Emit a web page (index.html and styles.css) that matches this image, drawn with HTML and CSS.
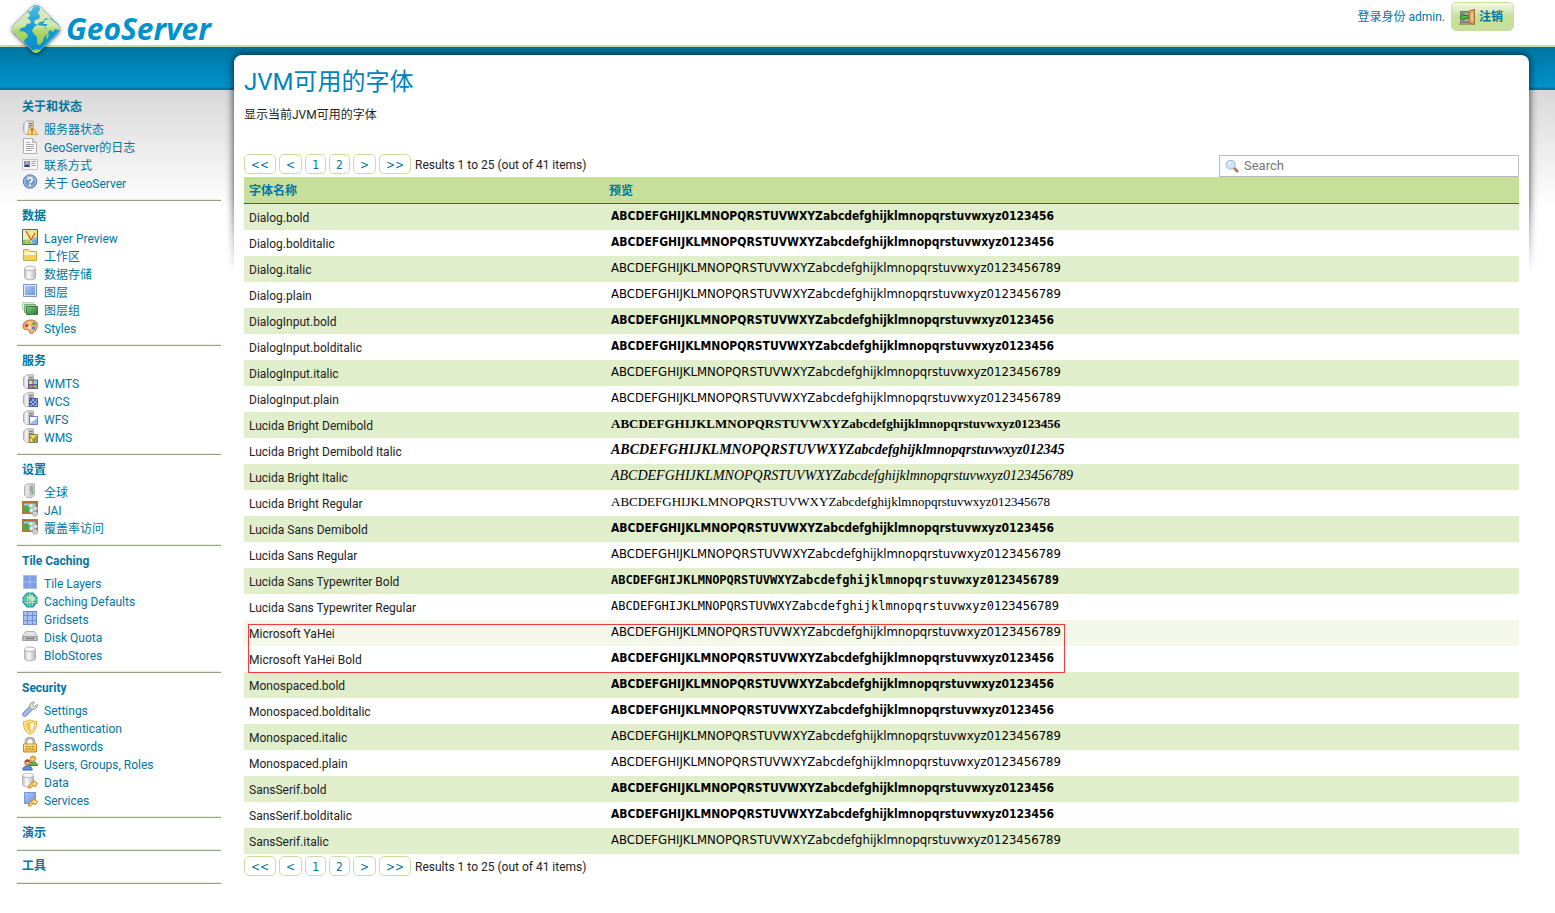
FILE: index.html
```html
<!DOCTYPE html>
<html lang="zh-CN">
<head>
<meta charset="utf-8">
<title>GeoServer: JVM可用的字体</title>
<link rel="stylesheet" href="styles.css">
</head>
<body>
<svg class="sprite" aria-hidden="true">
  <defs>
    <linearGradient id="g-blue" x1="0" y1="0" x2="1" y2="1"><stop offset="0" stop-color="#aac6f2"/><stop offset="1" stop-color="#7098dc"/></linearGradient>
    <linearGradient id="g-grey" x1="0" x2="1"><stop offset="0" stop-color="#c4c4c4"/><stop offset=".4" stop-color="#fafafa"/><stop offset="1" stop-color="#b4b4b4"/></linearGradient>
    <linearGradient id="g-gold" x1="0" y1="0" x2="0" y2="1"><stop offset="0" stop-color="#fff0a8"/><stop offset="1" stop-color="#efb83c"/></linearGradient>
    <linearGradient id="g-green" x1="0" y1="0" x2="1" y2="1"><stop offset="0" stop-color="#8cc88c"/><stop offset="1" stop-color="#217a2b"/></linearGradient>
    <symbol id="p-server" viewBox="0 0 16 16"><path d="M1.500 3.500 5 .8h6.500v10.700L9 14.500H4.500L1.500 12z" fill="#d8d8d8" stroke="#b0b0b0"/><path d="M4.500 1.800v12" stroke="#f6f6f6" stroke-width="2"/><path d="M6.500 2h4.500v11H6.500z" fill="#c4c4c4"/><path d="M7 3.500h3.500M7 5.500h3.500M7 7.500h3.500" stroke="#7f7f7f"/></symbol>
    <symbol id="p-db" viewBox="0 0 16 16"><path d="M2.500 3.500v9c0 1.300 2.500 2.300 5.500 2.300s5.500-1 5.500-2.300v-9z" fill="url(#g-grey)" stroke="#b4b4b4"/><ellipse cx="8" cy="3.300" rx="5.500" ry="2.300" fill="#f6f6f6" stroke="#b8b8b8"/></symbol>
    <symbol id="p-key" viewBox="0 0 16 16"><path d="M11.500 7.500 15.500 10.500 13.500 13.500 11 12.800 8.500 15H6.500v-2l3.500-3z" fill="#f6c95c" stroke="#c08a2c"/><circle cx="13" cy="10.800" r=".9" fill="#fff"/></symbol>
    <symbol id="i-status" viewBox="0 0 16 16"><use href="#p-server"/><path d="M10 5.500 15.500 14.500H4.500z" fill="#ffd977" stroke="#e0a040" stroke-linejoin="round"/><path d="M10 8.300v3.200M10 12.500v1.200" stroke="#6c4a12" stroke-width="1.300"/></symbol>
    <symbol id="i-log" viewBox="0 0 16 16"><path d="M1.500.5h9l4 4v11h-13z" fill="#fafafa" stroke="#b0b0b0"/><path d="M10.500.5v4h4" fill="#dedede" stroke="#b0b0b0"/><path d="M4 4.500h4M4 6.500h8M4 8.500h8M4 10.500h8M4 12.500h6" stroke="#ababab"/></symbol>
    <symbol id="i-contact" viewBox="0 0 16 16"><path d="M.5 3.500h15v10H.5z" fill="#f8f8f8" stroke="#c4c4c4"/><path d="M2 5h6v6H2z" fill="#5c91d6"/><circle cx="5" cy="7" r="1.700" fill="#e7a36b"/><path d="M2.500 11c.3-3 4.700-3 5 0z" fill="#263c70"/><path d="M9.500 5.500H14M9.500 7.500H13M9.500 9.500H14" stroke="#a0a0a0"/></symbol>
    <symbol id="i-about" viewBox="0 0 16 16"><circle cx="8" cy="7.500" r="6.700" fill="#7298d0" stroke="#5878ac"/><circle cx="8" cy="7.500" r="5.500" fill="none" stroke="#b7cdec"/><path d="M5.700 5.800C6 3 10.500 3.200 10.300 5.800 10.200 7.400 8 7.300 8 9.300M8 10.300v1.600" fill="none" stroke="#fff" stroke-width="1.700"/></symbol>
    <symbol id="i-preview" viewBox="0 0 16 16"><path d="M.5.5h15v15H.5z" fill="#f2e472"/><path d="M1 1h4l2 6-2 4H1z" fill="#e8efb4"/><path d="M10 10l5-2v7h-5z" fill="#67a8df"/><path d="M1 11l5-1 5 5H1z" fill="#8fc65c"/><path d="M5 1v14M10 1v14M1 5h14M1 10h14" stroke="#fff" stroke-opacity=".4"/><path d="M4 2l5 9 4-7" fill="none" stroke="#df4a32" stroke-width="1.300"/><path d="M.5.5h15v15H.5z" fill="none" stroke="#4f6b5c"/></symbol>
    <symbol id="i-folder" viewBox="0 0 16 16"><path d="M1.500 13.500v-11h5l1.500 2h6.500v9z" fill="#fbe49a" stroke="#d6a83c"/><path d="M2 8h12v5H2z" fill="#f4cf62"/><path d="M3 6.500h10" stroke="#fff" stroke-width="2"/></symbol>
    <symbol id="i-layer" viewBox="0 0 16 16"><path d="M1.500 1.500h13v12h-13z" fill="#dfe9fa" stroke="#7a95d0"/><path d="M3 3h10v9H3z" fill="url(#g-blue)"/></symbol>
    <symbol id="i-group" viewBox="0 0 16 16"><path d="M.5 1.500h11v7H.5z" fill="#dcefdc" stroke="#b6dab6"/><path d="M2.500 3.500h11v8h-11z" fill="#a7d3a7" stroke="#6fae72"/><path d="M4.500 5.500h11v8h-11z" fill="url(#g-green)" stroke="#2f7d35"/></symbol>
    <symbol id="i-styles" viewBox="0 0 16 16"><path d="M1 8C.5 4 4 1 9 1c4 0 6.500 2 6.300 5-.2 4-2.800 8.500-6 8.500-2.500 0-1-3-3-3.500S1.500 11 1 8z" fill="#efb378" stroke="#bd7040"/><circle cx="4.500" cy="6.500" r="1.700" fill="#df4b36"/><circle cx="8" cy="4" r="1.500" fill="#f4df53"/><circle cx="12" cy="4.700" r="1.600" fill="#55a74b"/><circle cx="7.500" cy="8.500" r="1.500" fill="#f8efe4"/><circle cx="11.500" cy="9" r="1.700" fill="#4c86ca"/></symbol>
    <symbol id="i-wmts" viewBox="0 0 16 16"><use href="#p-server"/><path d="M6 5.500h10V15H6z" fill="#4f5f8d"/><path d="M7 6.500h3.500V10H7z" fill="#f2d858"/><path d="M11.500 6.500H15V10h-3.500z" fill="#9fc7ef"/><path d="M7 11h3.500v3H7z" fill="#e5763e"/><path d="M11.500 11H15v3h-3.500z" fill="#7fbe58"/></symbol>
    <symbol id="i-wcs" viewBox="0 0 16 16"><use href="#p-server"/><path d="M7.500 6.500h8v8h-8z" fill="#9db2ea" stroke="#4659a8"/><path d="M8 7h2v2H8zM12 7h2v2h-2zM10 9h2v2h-2zM14 9h1v2h-1zM8 11h2v2H8zM12 11h2v2h-2zM10 13h2v1h-2z" fill="#4a60bd"/></symbol>
    <symbol id="i-wfs" viewBox="0 0 16 16"><use href="#p-server"/><path d="M7.500 6.500h8v8h-8z" fill="#fff" stroke="#6a80c0"/><path d="M8 14c1-4 4-2 7-6v6z" fill="#9fbfec"/></symbol>
    <symbol id="i-wms" viewBox="0 0 16 16"><use href="#p-server"/><path d="M7.500 6.500h8v8h-8z" fill="#f0dc60" stroke="#817a49"/><path d="M11 11l4-3v6h-5z" fill="#7dbb66"/><path d="M8 8l4 5 2-5" fill="none" stroke="#dc5a32"/></symbol>
    <symbol id="i-global" viewBox="0 0 16 16"><path d="M2.500 3 5.500.8h7v11l-2.500 2.700H5L2.500 12z" fill="#e2e2e2" stroke="#b0b0b0"/><path d="M7 1.500h5v12H7z" fill="#cacaca"/><path d="M8 4h3M8 6h3M8 8h3" stroke="#808080"/><path d="M9.500 9.500h1.500v1.500H9.500z" fill="#3da743"/></symbol>
    <symbol id="i-jai" viewBox="0 0 16 16"><path d="M1 1h14v11H1z" fill="#8fd0f0" stroke="#b47a34" stroke-width="2"/><path d="M2 11V5l3-1 6 7z" fill="#4ea84a"/><path d="M2 2h12v9" fill="none" stroke="#7d4f20" stroke-width=".6"/><circle cx="9" cy="4.500" r="1.500" fill="#fff08a"/><circle cx="9.500" cy="9.500" r="2" fill="#eee" stroke="#bbb"/><circle cx="13.500" cy="7.500" r="1.700" fill="#f2f2f2" stroke="#bbb"/><circle cx="13" cy="12.700" r="2.500" fill="#ededed" stroke="#a0a0a0"/><circle cx="13" cy="12.700" r=".8" fill="#888"/></symbol>
    <symbol id="i-tiles" viewBox="0 0 16 16"><path d="M1 1h14v14H1z" fill="#a9bfee"/><path d="M2 2h5.500v5.500H2zM8.500 2H14v5.500H8.500zM2 8.500h5.500V14H2zM8.500 8.500H14V14H8.500z" fill="#7f9fe0"/></symbol>
    <symbol id="i-cache" viewBox="0 0 16 16"><path d="M5 1h6l4 4.500v5L11 15H5l-4-4.500v-5z" fill="#3fb39c" stroke="#1795a0" stroke-linejoin="round"/><path d="M8 2l6 5-4 3-4-4z" fill="#b7e089"/><path d="M5.500 2.500v11M8 1v14M10.500 2.500v11M2.500 5.500h11M1 8h14M2.500 10.500h11" stroke="#e4f8ec" stroke-opacity=".7" stroke-width=".8"/></symbol>
    <symbol id="i-grid" viewBox="0 0 16 16"><path d="M1 1h14v14H1z" fill="#6f8ed8"/><path d="M2 2h3v3H2zM6 2h4v3H6zM11 2h3v3h-3zM2 6h3v4H2zM6 6h4v4H6zM11 6h3v4h-3zM2 11h3v3H2zM6 11h4v3H6zM11 11h3v3h-3z" fill="#a5c0f0"/></symbol>
    <symbol id="i-disk" viewBox="0 0 16 16"><path d="M3.500 3.500h9l3 5v4H.5v-4z" fill="#e2e2e2" stroke="#b4b4b4"/><path d="M1 8.500h14v4H1z" fill="#c8c8c8" stroke="#9c9c9c"/><path d="M3.500 10.500h9" stroke="#777" stroke-width="1.500"/></symbol>
    <symbol id="i-wrench" viewBox="0 0 16 16"><path d="M2.800 13.200 8 8" stroke="#6c8ace" stroke-width="5" stroke-linecap="round"/><path d="M2.800 13.200 8 8" stroke="#a3bdf0" stroke-width="3" stroke-linecap="round"/><path d="M7.500 6.500C7 3 9.500.5 12.500 1L10.500 3.500l2 2 3-2c.2 3-2.500 5.500-5.500 5z" fill="#d8d8d8" stroke="#9c9c9c"/></symbol>
    <symbol id="i-shield" viewBox="0 0 16 16"><path d="M1.500 2.500C4 2.500 6 2 8 .7c2 1.300 4 1.800 6.500 1.800C14.500 9 13 13 8 15.300 3 13 1.500 9 1.500 2.500z" fill="#fbe9a8" stroke="#e2ac33"/><path d="M3.500 4C5.500 3.800 6.700 3.500 8 2.700V13C5 11.500 3.700 8.500 3.500 4z" fill="#f5c84c"/><path d="M8 2.700c1.300.8 2.500 1.100 4.500 1.300C12.300 8.500 11 11.500 8 13z" fill="#fff" stroke="#efc04a"/></symbol>
    <symbol id="i-lock" viewBox="0 0 16 16"><path d="M4 7.500V4.800c0-5 8-5 8 0v2.700" fill="none" stroke="#8c8c8c" stroke-width="2.600"/><path d="M4 7.500V4.800c0-5 8-5 8 0v2.700" fill="none" stroke="#dcdcdc"/><path d="M1.500 7h13v8h-13z" fill="url(#g-gold)" stroke="#c78a24"/><path d="M3.500 9.500h3M3.500 12h3M9.500 9.500h3M9.500 12h3M8 9v4" stroke="#b07820"/></symbol>
    <symbol id="i-users" viewBox="0 0 16 16"><path d="M6.500 10.500c0-5 9-5 9 0z" fill="#67b45b" stroke="#3e8737"/><circle cx="11" cy="3.700" r="2.700" fill="#f4c68c" stroke="#c5882f"/><path d="M8.300 3C8.500 0 13.500 0 13.700 3z" fill="#e2a62f"/><path d="M.8 15c0-5.500 9.400-5.500 9.400 0z" fill="#5b93dd" stroke="#2f62ad"/><circle cx="5.500" cy="7.500" r="2.800" fill="#f0b98a" stroke="#a8642f"/><path d="M2.700 7C3 3.500 8 3.500 8.300 7z" fill="#a2512a"/></symbol>
    <symbol id="i-dbkey" viewBox="0 0 16 16"><g transform="translate(-2 -1)"><use href="#p-db" width="16" height="16"/></g><use href="#p-key"/></symbol>
    <symbol id="i-svckey" viewBox="0 0 16 16"><path d="M2.500 1.500h11v11h-11z" fill="url(#g-blue)" stroke="#7494d4"/><use href="#p-key"/></symbol>
    <symbol id="i-door" viewBox="0 0 16 16"><path d="M1 2h10v12H1z" fill="#777a70"/><path d="M2.500 3.500h7v9h-7z" fill="#a9ada2"/><path d="M0 15h15" stroke="#8a5b32"/><path d="M10 2 15.500.3v15.400L10 13.500z" fill="#dca262" stroke="#ad6c32"/><path d="M12 4l2-.7v9.200l-2-.7z" fill="#efc28b"/><path d="M1 8l4-3.500v2h4v3H5v2z" fill="#53ba4e" stroke="#237a27"/></symbol>
    <symbol id="i-search" viewBox="0 0 16 16"><path d="M10 10 14 14" stroke="#b07a44" stroke-width="3" stroke-linecap="round"/><circle cx="6.500" cy="6.500" r="5" fill="#cfe3fa" stroke="#a9c0e6" stroke-width="1.500"/><path d="M3.800 6c.3-1.500 1.500-2.500 3-2.500" fill="none" stroke="#fff" stroke-width="1.300"/></symbol>
  </defs>
</svg>

<header class="header">
  <a class="logo" href="#">
    <svg class="logo-mark" viewBox="0 0 54 54" aria-hidden="true">
      <defs>
        <linearGradient id="sea" x1="0" y1="0" x2="0" y2="1"><stop offset="0" stop-color="#5cc0e4"/><stop offset=".45" stop-color="#1a9dd3"/><stop offset="1" stop-color="#0089c6"/></linearGradient>
        <linearGradient id="land" gradientUnits="userSpaceOnUse" x1="0" y1="4" x2="0" y2="44"><stop offset="0" stop-color="#dcecc4"/><stop offset=".5" stop-color="#cfe5a6"/><stop offset=".6" stop-color="#b4d873"/><stop offset="1" stop-color="#93c83e"/></linearGradient>
        <clipPath id="gem"><path d="M23 5q4-4 8 0l18 18q4 4 0 8L31 49q-4 4-8 0L5 31q-4-4 0-8z"/></clipPath>
      </defs>
      <path class="logo-shade" d="M23 5q4-4 8 0l18 18q4 4 0 8L31 49q-4 4-8 0L5 31q-4-4 0-8z" fill="#0a90c8"/>
      <g clip-path="url(#gem)">
        <path d="M0 0h54v54H0z" fill="url(#sea)"/>
        <g fill="url(#land)">
          <path d="M2 24l14-14 4 1 1 3-3 2 3 2 1 3-4 1-2 3-4 1-2 4-3 1-2 2-4-3z"/>
          <path d="M7 31l5-2 4 1 3 3-1 3-2 1-1 3-2 0-6-5z"/>
          <path d="M19 7l3-3 2 1-1 3-3 2z"/>
          <path d="M31 4l8 7 3 5-2 1-4-1-1 3-4 1-3 3-3-2 1-3 4-1 1-3-2-3 2-3z"/>
          <path d="M36 18l5-1 8 6 3 4-3 1-3-1-2 3-3-2-2 1-3-4-3 0z"/>
          <path d="M25 25l4-2 5 1 3 3 3 1-1 4-4 3-1 4-3 4-3-1 0-7-3-3-2-3z"/>
          <path d="M38 33l2-1-1 4-2 1z"/>
          <path d="M22 49l5-2 6 1-4 5h-4z"/>
        </g>
        <path d="M33 22l5 0 0 2-4 0z" fill="#1a9dd3"/>
      </g>
      <path d="M23.500 5.500q3.500-3.500 7 0l18 18q3.500 3.500 0 7l-18 18q-3.500 3.500-7 0l-18-18q-3.500-3.500 0-7z" fill="none" stroke="#fff" stroke-opacity=".35"/>
    </svg>
    <span class="logo-text">GeoServer</span>
  </a>
  <form class="login" action="#">
    <span>登录身份 admin.</span>
    <button class="logout" type="button"><svg class="icon" aria-hidden="true"><use href="#i-door"/></svg>注销</button>
  </form>
</header>

<div class="layout">
  <nav class="sidebar">
    <section class="group">
      <h2>关于和状态</h2>
      <ul>
        <li><a href="#"><svg class="icon"><use href="#i-status"/></svg>服务器状态</a></li>
        <li><a href="#"><svg class="icon"><use href="#i-log"/></svg>GeoServer的日志</a></li>
        <li><a href="#"><svg class="icon"><use href="#i-contact"/></svg>联系方式</a></li>
        <li><a href="#"><svg class="icon"><use href="#i-about"/></svg>关于 GeoServer</a></li>
      </ul>
    </section>
    <section class="group">
      <h2>数据</h2>
      <ul>
        <li><a href="#"><svg class="icon"><use href="#i-preview"/></svg>Layer Preview</a></li>
        <li><a href="#"><svg class="icon"><use href="#i-folder"/></svg>工作区</a></li>
        <li><a href="#"><svg class="icon"><use href="#p-db"/></svg>数据存储</a></li>
        <li><a href="#"><svg class="icon"><use href="#i-layer"/></svg>图层</a></li>
        <li><a href="#"><svg class="icon"><use href="#i-group"/></svg>图层组</a></li>
        <li><a href="#"><svg class="icon"><use href="#i-styles"/></svg>Styles</a></li>
      </ul>
    </section>
    <section class="group">
      <h2>服务</h2>
      <ul>
        <li><a href="#"><svg class="icon"><use href="#i-wmts"/></svg>WMTS</a></li>
        <li><a href="#"><svg class="icon"><use href="#i-wcs"/></svg>WCS</a></li>
        <li><a href="#"><svg class="icon"><use href="#i-wfs"/></svg>WFS</a></li>
        <li><a href="#"><svg class="icon"><use href="#i-wms"/></svg>WMS</a></li>
      </ul>
    </section>
    <section class="group">
      <h2>设置</h2>
      <ul>
        <li><a href="#"><svg class="icon"><use href="#i-global"/></svg>全球</a></li>
        <li><a href="#"><svg class="icon"><use href="#i-jai"/></svg>JAI</a></li>
        <li><a href="#"><svg class="icon"><use href="#i-jai"/></svg>覆盖率访问</a></li>
      </ul>
    </section>
    <section class="group">
      <h2>Tile Caching</h2>
      <ul>
        <li><a href="#"><svg class="icon"><use href="#i-tiles"/></svg>Tile Layers</a></li>
        <li><a href="#"><svg class="icon"><use href="#i-cache"/></svg>Caching Defaults</a></li>
        <li><a href="#"><svg class="icon"><use href="#i-grid"/></svg>Gridsets</a></li>
        <li><a href="#"><svg class="icon"><use href="#i-disk"/></svg>Disk Quota</a></li>
        <li><a href="#"><svg class="icon"><use href="#p-db"/></svg>BlobStores</a></li>
      </ul>
    </section>
    <section class="group">
      <h2>Security</h2>
      <ul>
        <li><a href="#"><svg class="icon"><use href="#i-wrench"/></svg>Settings</a></li>
        <li><a href="#"><svg class="icon"><use href="#i-shield"/></svg>Authentication</a></li>
        <li><a href="#"><svg class="icon"><use href="#i-lock"/></svg>Passwords</a></li>
        <li><a href="#"><svg class="icon"><use href="#i-users"/></svg>Users, Groups, Roles</a></li>
        <li><a href="#"><svg class="icon"><use href="#i-dbkey"/></svg>Data</a></li>
        <li><a href="#"><svg class="icon"><use href="#i-svckey"/></svg>Services</a></li>
      </ul>
    </section>
    <section class="group"><h2>演示</h2></section>
    <section class="group"><h2>工具</h2></section>
  </nav>

  <main class="page">
    <div class="shade"></div>
    <h1>JVM可用的字体</h1>
    <p class="intro">显示当前JVM可用的字体</p>
    <div class="toolbar">
      <div class="pager">
        <a href="#">&lt;&lt;</a><a href="#">&lt;</a><a href="#">1</a><a href="#">2</a><a href="#">&gt;</a><a href="#">&gt;&gt;</a>
        <span>Results 1 to 25 (out of 41 items)</span>
      </div>
      <label class="search"><svg class="icon" aria-hidden="true"><use href="#i-search"/></svg><input type="text" placeholder="Search" aria-label="Search"></label>
    </div>
    <table class="fonts">
      <thead><tr><th class="col-name" scope="col">字体名称</th><th scope="col">预览</th></tr></thead>
      <tbody>
        <tr><td>Dialog.bold</td><td><span class="sample bold">ABCDEFGHIJKLMNOPQRSTUVWXYZabcdefghijklmnopqrstuvwxyz0123456</span></td></tr>
        <tr><td>Dialog.bolditalic</td><td><span class="sample bold">ABCDEFGHIJKLMNOPQRSTUVWXYZabcdefghijklmnopqrstuvwxyz0123456</span></td></tr>
        <tr><td>Dialog.italic</td><td><span class="sample">ABCDEFGHIJKLMNOPQRSTUVWXYZabcdefghijklmnopqrstuvwxyz0123456789</span></td></tr>
        <tr><td>Dialog.plain</td><td><span class="sample">ABCDEFGHIJKLMNOPQRSTUVWXYZabcdefghijklmnopqrstuvwxyz0123456789</span></td></tr>
        <tr><td>DialogInput.bold</td><td><span class="sample bold">ABCDEFGHIJKLMNOPQRSTUVWXYZabcdefghijklmnopqrstuvwxyz0123456</span></td></tr>
        <tr><td>DialogInput.bolditalic</td><td><span class="sample bold">ABCDEFGHIJKLMNOPQRSTUVWXYZabcdefghijklmnopqrstuvwxyz0123456</span></td></tr>
        <tr><td>DialogInput.italic</td><td><span class="sample">ABCDEFGHIJKLMNOPQRSTUVWXYZabcdefghijklmnopqrstuvwxyz0123456789</span></td></tr>
        <tr><td>DialogInput.plain</td><td><span class="sample">ABCDEFGHIJKLMNOPQRSTUVWXYZabcdefghijklmnopqrstuvwxyz0123456789</span></td></tr>
        <tr><td>Lucida Bright Demibold</td><td><span class="sample serif bold">ABCDEFGHIJKLMNOPQRSTUVWXYZabcdefghijklmnopqrstuvwxyz0123456</span></td></tr>
        <tr><td>Lucida Bright Demibold Italic</td><td><span class="sample serif bold italic">ABCDEFGHIJKLMNOPQRSTUVWXYZabcdefghijklmnopqrstuvwxyz012345</span></td></tr>
        <tr><td>Lucida Bright Italic</td><td><span class="sample serif italic">ABCDEFGHIJKLMNOPQRSTUVWXYZabcdefghijklmnopqrstuvwxyz0123456789</span></td></tr>
        <tr><td>Lucida Bright Regular</td><td><span class="sample serif">ABCDEFGHIJKLMNOPQRSTUVWXYZabcdefghijklmnopqrstuvwxyz012345678</span></td></tr>
        <tr><td>Lucida Sans Demibold</td><td><span class="sample bold">ABCDEFGHIJKLMNOPQRSTUVWXYZabcdefghijklmnopqrstuvwxyz0123456</span></td></tr>
        <tr><td>Lucida Sans Regular</td><td><span class="sample">ABCDEFGHIJKLMNOPQRSTUVWXYZabcdefghijklmnopqrstuvwxyz0123456789</span></td></tr>
        <tr><td>Lucida Sans Typewriter Bold</td><td><span class="sample mono bold">ABCDEFGHIJKLMNOPQRSTUVWXYZabcdefghijklmnopqrstuvwxyz0123456789</span></td></tr>
        <tr><td>Lucida Sans Typewriter Regular</td><td><span class="sample mono">ABCDEFGHIJKLMNOPQRSTUVWXYZabcdefghijklmnopqrstuvwxyz0123456789</span></td></tr>
        <tr class="hovered"><td>Microsoft YaHei<span class="marker"></span></td><td><span class="sample">ABCDEFGHIJKLMNOPQRSTUVWXYZabcdefghijklmnopqrstuvwxyz0123456789</span></td></tr>
        <tr><td>Microsoft YaHei Bold</td><td><span class="sample bold">ABCDEFGHIJKLMNOPQRSTUVWXYZabcdefghijklmnopqrstuvwxyz0123456</span></td></tr>
        <tr><td>Monospaced.bold</td><td><span class="sample bold">ABCDEFGHIJKLMNOPQRSTUVWXYZabcdefghijklmnopqrstuvwxyz0123456</span></td></tr>
        <tr><td>Monospaced.bolditalic</td><td><span class="sample bold">ABCDEFGHIJKLMNOPQRSTUVWXYZabcdefghijklmnopqrstuvwxyz0123456</span></td></tr>
        <tr><td>Monospaced.italic</td><td><span class="sample">ABCDEFGHIJKLMNOPQRSTUVWXYZabcdefghijklmnopqrstuvwxyz0123456789</span></td></tr>
        <tr><td>Monospaced.plain</td><td><span class="sample">ABCDEFGHIJKLMNOPQRSTUVWXYZabcdefghijklmnopqrstuvwxyz0123456789</span></td></tr>
        <tr><td>SansSerif.bold</td><td><span class="sample bold">ABCDEFGHIJKLMNOPQRSTUVWXYZabcdefghijklmnopqrstuvwxyz0123456</span></td></tr>
        <tr><td>SansSerif.bolditalic</td><td><span class="sample bold">ABCDEFGHIJKLMNOPQRSTUVWXYZabcdefghijklmnopqrstuvwxyz0123456</span></td></tr>
        <tr><td>SansSerif.italic</td><td><span class="sample">ABCDEFGHIJKLMNOPQRSTUVWXYZabcdefghijklmnopqrstuvwxyz0123456789</span></td></tr>
      </tbody>
    </table>
    <div class="pager pager-bottom">
      <a href="#">&lt;&lt;</a><a href="#">&lt;</a><a href="#">1</a><a href="#">2</a><a href="#">&gt;</a><a href="#">&gt;&gt;</a>
      <span>Results 1 to 25 (out of 41 items)</span>
    </div>
  </main>
</div>
</body>
</html>
```
FILE: styles.css
```css
* { box-sizing: border-box; }

body {
  margin: 0;
  background: #fff;
  color: #222;
  font: 12px/18px Roboto, "Noto Sans CJK SC", sans-serif;
}

a { color: #0076a1; text-decoration: none; }
h1, h2, p, ul { margin: 0; padding: 0; }
ul { list-style: none; }

.sprite { position: absolute; width: 0; height: 0; }
.icon { width: 16px; height: 16px; flex: none; }

/* header */
.header {
  display: flex;
  justify-content: space-between;
  align-items: flex-start;
  height: 47px;
  border-bottom: 2px solid #c6e09b;
}
.logo {
  position: relative;
  z-index: 2;
  display: flex;
  align-items: center;
  gap: 3px;
  padding: 2px 0 0 9px;
}
.logo-mark { width: 54px; height: 54px; overflow: visible; }
.logo-shade { filter: drop-shadow(0 1px 2px rgba(0, 0, 0, .6)); }
.logo-text {
  color: #0092cc;
  font: italic 700 30px/40px "Noto Sans", sans-serif;
}
.login {
  display: flex;
  align-items: center;
  gap: 6px;
  padding: 2px 41px 0 0;
  color: #0076a1;
}
.logout {
  display: flex;
  align-items: center;
  gap: 4px;
  height: 29px;
  padding: 0 10px 0 7px;
  border: 1px solid #c6e09b;
  border-radius: 5px;
  background: linear-gradient(#f4f9ea, #c6e09b 50%);
  color: #0076a1;
  font: inherit;
  font-weight: 700;
}

/* columns */
.layout {
  position: relative;
  z-index: 0;
  display: grid;
  grid-template-columns: 234px minmax(0, 1fr);
  padding-right: 26px;
  background:
    linear-gradient(#0076a1, #0092cc 40px, #0076a1 41px, #0076a1 43px, transparent 43px) no-repeat,
    linear-gradient(#d8d8d8 43px, #fff 160px);
}

/* navigation */
.sidebar { padding: 45px 13px 0 17px; }
.group {
  padding: 6px 5px 8px;
  border-bottom: 1px solid #95a085;
  box-shadow: inset 0 -1px #e8f0dc;
}
.group h2 { color: #0076a1; font-size: 12px; line-height: 18px; }
.group ul { padding: 4px 0 0; }
.group a { display: flex; gap: 6px; height: 18px; line-height: 20px; }

/* content panel */
.page {
  position: relative;
  margin-top: 8px;
  padding: 12px 10px 24px;
  border-radius: 8px 8px 0 0;
  background: #fff;
}
.shade {
  position: absolute;
  z-index: -1;
  inset: -8px -10px auto;
  height: 228px;
  -webkit-mask: linear-gradient(#000 150px, transparent);
  mask: linear-gradient(#000 150px, transparent);
}
.shade::before {
  content: "";
  position: absolute;
  inset: 8px 10px 0;
  border-radius: 8px;
  box-shadow: 0 0 8px rgba(0, 0, 0, .8);
}
.page h1 { color: #0083bd; font-size: 24px; line-height: 30px; font-weight: 400; }
.intro { margin: 9px 0 30px; }

.toolbar { display: flex; justify-content: space-between; align-items: flex-end; }
.pager { display: flex; gap: 3px; height: 20px; margin-bottom: 3px; line-height: 20px; }
.pager a {
  padding: 0 6px;
  border: 1px solid #c6e09b;
  border-radius: 5px;
  font-family: "DejaVu Sans Condensed", "DejaVu Sans", sans-serif;
}
.pager span { padding-left: 1px; line-height: 22px; }
.pager-bottom { margin-top: 2px; }
.search {
  display: flex;
  align-items: center;
  gap: 5px;
  width: 300px;
  height: 22px;
  padding: 0 5px;
  border: 1px solid #bbb;
}
.search .icon { width: 14px; height: 14px; }
.search input {
  flex: 1;
  min-width: 0;
  border: 0;
  padding: 0;
  outline: 0;
  background: none;
  font: 13px/18px Roboto, sans-serif;
}
.search input::placeholder { color: #757575; }

/* font table */
.fonts { width: 100%; border-spacing: 0; table-layout: fixed; }
.fonts th {
  height: 27px;
  padding: 2px 5px 0;
  border-bottom: 1px solid #0076a1;
  background: #c6df99;
  color: #0076a1;
  text-align: left;
}
.fonts .col-name { width: 360px; }
.fonts td { position: relative; height: 26px; padding: 2px 5px 0; }
.fonts tbody tr:nth-child(odd) { background: #e0eecb; }
.fonts tbody tr.hovered { background: #f4f8ea; }

.sample {
  display: block;
  height: 22px;
  padding-left: 2px;
  color: #000;
  font: 13px/18px "DejaVu Sans Condensed", "DejaVu Sans", sans-serif;
  white-space: nowrap;
}
.sample.bold { font-weight: 700; font-size: 12px; }
.sample.serif { font-family: "Liberation Serif", serif; font-size: 13px; }
.sample.mono { font-family: "DejaVu Sans Mono", monospace; font-size: 12px; }
.sample.italic { font-style: italic; font-size: 14px; }

/* annotation frame over two rows */
.marker {
  position: absolute;
  z-index: 1;
  top: 4px;
  left: 4px;
  width: 817px;
  height: 49px;
  border: 1px solid #f23c3c;
  pointer-events: none;
}
```
